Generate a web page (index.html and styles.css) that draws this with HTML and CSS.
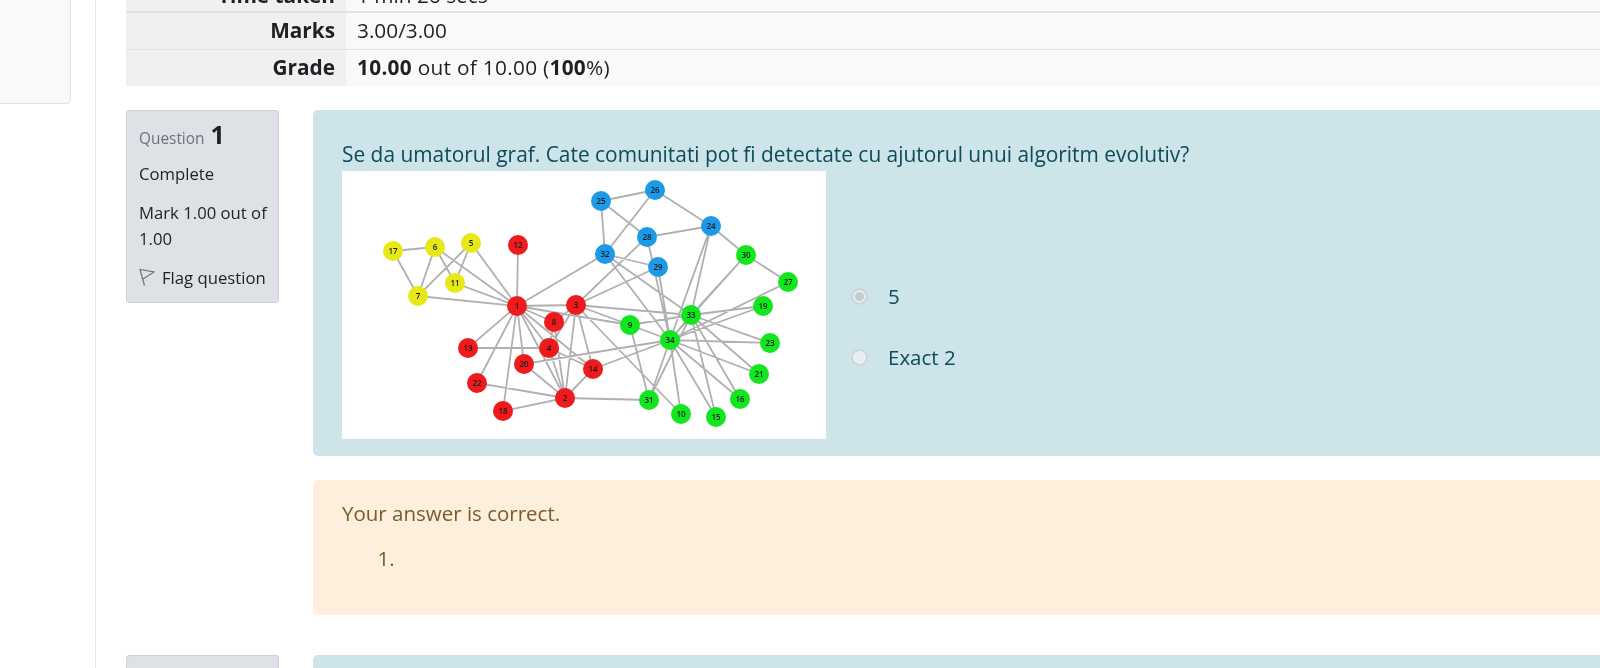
FILE: index.html
```html
<!DOCTYPE html>
<html lang="en">
<head>
  <meta charset="UTF-8" />
  <title>Review</title>
  <link rel="stylesheet" href="styles.css">
</head>
<body>
  <aside class="side">
    <div class="side-card"></div>
  </aside>
  <main>
    <table class="summary">
      <tr class="row-time"><th>Time taken</th><td>1 min 26 secs</td></tr>
      <tr><th>Marks</th><td>3.00/3.00</td></tr>
      <tr><th>Grade</th><td><b>10.00</b> out of 10.00 (<b>100</b>%)</td></tr>
    </table>

    <section class="que">
      <div class="info">
        <h3 class="qno">Question <span>1</span></h3>
        <div class="state">Complete</div>
        <div class="grade">Mark 1.00 out of 1.00</div>
        <div class="flag">
          <svg class="flag-icon" viewBox="0 0 16 18"><path d="M5.5 17.5L1 1.5 15 4 4 11"/></svg>
          <span>Flag question</span>
        </div>
      </div>
      <div class="content">
        <div class="formulation">
          <p class="qtext">Se da umatorul graf. Cate comunitati pot fi detectate cu ajutorul unui algoritm evolutiv?</p>
          <div class="answer-row">
            <svg class="graph" viewBox="342 171 484 268">
              <path class="edges" d="M565 398L517 306M576 305L517 306M576 305L565 398M549 348L517 306M549 348L565 398M549 348L576 305M471 243L517 306M435 247L517 306M418 296L517 306M418 296L471 243M418 296L435 247M554 322L517 306M554 322L565 398M554 322L576 305M554 322L549 348M630 325L517 306M630 325L576 305M681 414L576 305M455 283L517 306M455 283L471 243M455 283L435 247M518 245L517 306M468 348L517 306M468 348L549 348M593 369L517 306M593 369L565 398M593 369L576 305M593 369L549 348M393 251L435 247M393 251L418 296M503 411L517 306M503 411L565 398M524 364L517 306M524 364L565 398M477 383L517 306M477 383L565 398M655 190L711 226M655 190L601 201M647 237L576 305M647 237L711 226M647 237L601 201M658 267L576 305M746 255L711 226M746 255L788 282M649 400L565 398M649 400L630 325M605 254L517 306M605 254L601 201M605 254L655 190M605 254L658 267M691 315L576 305M691 315L630 325M691 315L716 417M691 315L740 399M691 315L763 306M691 315L759 374M691 315L770 343M691 315L711 226M691 315L746 255M691 315L649 400M691 315L605 254M670 340L630 325M670 340L681 414M670 340L593 369M670 340L716 417M670 340L740 399M670 340L763 306M670 340L524 364M670 340L759 374M670 340L770 343M670 340L711 226M670 340L788 282M670 340L647 237M670 340L658 267M670 340L746 255M670 340L649 400M670 340L605 254M670 340L691 315"/>
              <g class="nodes">
                <g class="yellow">
                  <circle cx="393" cy="251" r="10"/><circle cx="435" cy="247" r="10"/><circle cx="471" cy="243" r="10"/><circle cx="455" cy="283" r="10"/><circle cx="418" cy="296" r="10"/>
                </g>
                <g class="red">
                  <circle cx="518" cy="245" r="10"/><circle cx="517" cy="306" r="10"/><circle cx="576" cy="305" r="10"/><circle cx="554" cy="322" r="10"/><circle cx="468" cy="348" r="10"/><circle cx="549" cy="348" r="10"/><circle cx="524" cy="364" r="10"/><circle cx="593" cy="369" r="10"/><circle cx="477" cy="383" r="10"/><circle cx="565" cy="398" r="10"/><circle cx="503" cy="411" r="10"/>
                </g>
                <g class="blue">
                  <circle cx="601" cy="201" r="10"/><circle cx="655" cy="190" r="10"/><circle cx="711" cy="226" r="10"/><circle cx="647" cy="237" r="10"/><circle cx="605" cy="254" r="10"/><circle cx="658" cy="267" r="10"/>
                </g>
                <g class="green">
                  <circle cx="746" cy="255" r="10"/><circle cx="788" cy="282" r="10"/><circle cx="763" cy="306" r="10"/><circle cx="691" cy="315" r="10"/><circle cx="630" cy="325" r="10"/><circle cx="670" cy="340" r="10"/><circle cx="770" cy="343" r="10"/><circle cx="759" cy="374" r="10"/><circle cx="740" cy="399" r="10"/><circle cx="649" cy="400" r="10"/><circle cx="681" cy="414" r="10"/><circle cx="716" cy="417" r="10"/>
                </g>
              </g>
              <g class="labels">
                <text x="393" y="254">17</text><text x="435" y="250">6</text><text x="471" y="246">5</text><text x="455" y="286">11</text><text x="418" y="299">7</text>
                <text x="518" y="248">12</text><text x="517" y="309">1</text><text x="576" y="308">3</text><text x="554" y="325">8</text><text x="468" y="351">13</text><text x="549" y="351">4</text><text x="524" y="367">20</text><text x="593" y="372">14</text><text x="477" y="386">22</text><text x="565" y="401">2</text><text x="503" y="414">18</text>
                <text x="601" y="204">25</text><text x="655" y="193">26</text><text x="711" y="229">24</text><text x="647" y="240">28</text><text x="605" y="257">32</text><text x="658" y="270">29</text>
                <text x="746" y="258">30</text><text x="788" y="285">27</text><text x="763" y="309">19</text><text x="691" y="318">33</text><text x="630" y="328">9</text><text x="670" y="343">34</text><text x="770" y="346">23</text><text x="759" y="377">21</text><text x="740" y="402">16</text><text x="649" y="403">31</text><text x="681" y="417">10</text><text x="716" y="420">15</text>
              </g>
            </svg>
            <div class="answers">
              <label class="answer"><input type="radio" name="q1" checked disabled><span>5</span></label>
              <label class="answer"><input type="radio" name="q1" disabled><span>Exact 2</span></label>
            </div>
          </div>
        </div>
        <div class="outcome">
          <p class="feedback">Your answer is correct.</p>
          <ol class="feedback-list"><li></li></ol>
        </div>
      </div>
    </section>

    <section class="que que-next">
      <div class="info info-next"></div>
      <div class="content"><div class="formulation"></div></div>
    </section>
  </main>
</body>
</html>
```

FILE: styles.css
```css
:root {
  --text: #1d2125;
  --line: #dee2e6;
  --info-bg: #dee1e6;
  --form-bg: #cde5e9;
  --form-text: #0f4a5a;
  --out-bg: #fcefdc;
  --out-text: #7d5a29;
}
* {
  margin: 0;
  padding: 0;
  box-sizing: border-box;
}
html, body {
  height: 100%;
  overflow: hidden;
}
body {
  display: flex;
  font-family: 'Open Sans', sans-serif;
  font-size: 20.5px;
  line-height: 1.5;
  color: var(--text);
  background: #fff;
}
.side {
  flex: 0 0 96px;
  border-right: 1px solid #e4e6e9;
}
.side-card {
  width: 73px;
  height: 110px;
  margin: -6px 0 0 -2px;
  background: #f8f9fa;
  border: 1px solid #dfe2e6;
  border-radius: 0 0 5px 0;
}
main {
  flex: 1;
  min-width: 0;
  padding-left: 30px;
  filter: blur(0.3px);
}
.summary {
  width: 100%;
  margin-top: -23px;
  border-collapse: collapse;
  background: #f9f9fa;
  font-size: 20.8px;
}
.summary th {
  width: 220px;
  padding: 2.5px 11px 2.5px 0;
  text-align: right;
  background: #f0f0f0;
  font-weight: 700;
}
.summary td {
  padding: 2.5px 11px;
}
.summary tr + tr th,
.summary tr + tr td {
  border-top: 1px solid var(--line);
}
.summary tr:last-child td {
  letter-spacing: 0.3px;
}
.row-time th,
.row-time td {
  padding-bottom: 0;
  border-bottom: 2px solid var(--line);
}
.que {
  display: flex;
  gap: 34px;
  margin-top: 24px;
  margin-right: -10px;
}
.que-next {
  margin-top: 40px;
}
.info {
  flex: 0 0 153px;
  align-self: flex-start;
  height: 193px;
  padding: 5px 5px 0 12px;
  background: var(--info-bg);
  border: 1px solid #cdd1d7;
  border-radius: 3px;
  font-size: 16.7px;
}
.info-next {
  height: 80px;
}
.qno {
  font-size: 15.4px;
  font-weight: 400;
  color: #6a737b;
}
.qno span {
  margin-left: 2px;
  font-size: 25px;
  font-weight: 700;
  color: var(--text);
}
.state {
  margin-top: 7px;
}
.grade {
  margin-top: 14px;
  line-height: 26px;
}
.flag {
  display: flex;
  align-items: center;
  gap: 7px;
  margin-top: 13px;
}
.flag-icon {
  width: 16px;
  height: 18px;
  fill: none;
  stroke: #6a737b;
  stroke-width: 1.2;
}
.content {
  flex: 1;
  min-width: 0;
}
.formulation {
  height: 346px;
  padding: 28px 30px 0 29px;
  background: var(--form-bg);
  color: var(--form-text);
  border-radius: 5px;
}
.qtext {
  font-size: 20.9px;
  line-height: 33px;
}
.answer-row {
  display: flex;
}
.graph {
  flex: 0 0 484px;
  height: 268px;
  background: #fff;
}
.edges {
  fill: none;
  stroke: #b0b0b0;
  stroke-width: 1.8;
  filter: blur(0.4px);
}
.nodes {
  filter: blur(0.4px);
}
.yellow { fill: #e8e818; }
.red { fill: #ee1a1c; }
.blue { fill: #1c9ae8; }
.green { fill: #12e61e; }
.labels {
  font-size: 8px;
  font-weight: 600;
  fill: #1a1a1a;
  text-anchor: middle;
  filter: blur(0.3px);
}
.answers {
  padding: 109px 0 0 25px;
}
.answer {
  display: flex;
  align-items: center;
  gap: 20px;
  height: 32px;
  margin-bottom: 29px;
}
.answer input {
  appearance: none;
  width: 17px;
  height: 17px;
  border: 2px solid #cfd6d9;
  border-radius: 50%;
  background: #e7eff2;
}
.answer input:checked {
  background: #c6cbcd;
  box-shadow: inset 0 0 0 2px #e7eff2;
}
.outcome {
  height: 135px;
  margin-top: 24px;
  padding: 18px 29px;
  background: var(--out-bg);
  color: var(--out-text);
  border-radius: 5px;
}
.feedback-list {
  margin-top: 14px;
  padding-left: 58px;
}
```
